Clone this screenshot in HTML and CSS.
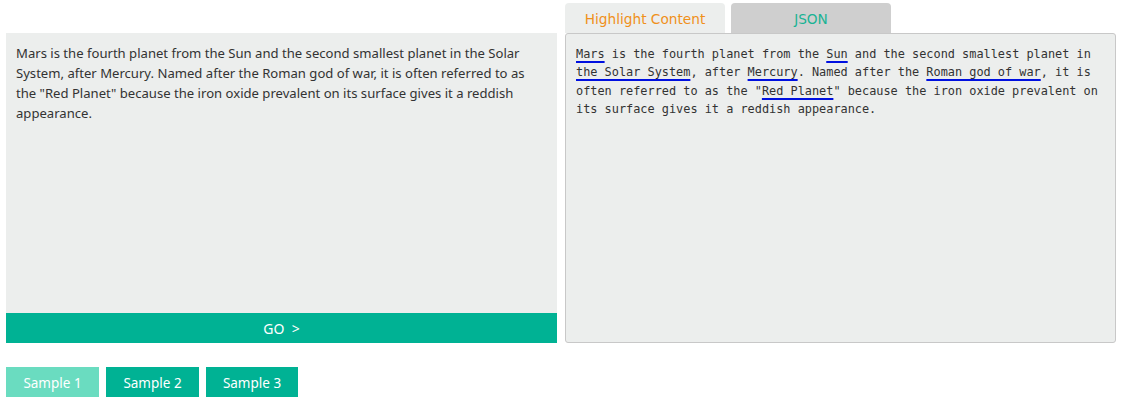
FILE: index.html
```html
<!DOCTYPE html>
<html>
<head>
<meta charset="utf-8">
<link rel="stylesheet" href="styles.css">
</head>
<body>
<div class="main">
  <div class="left">
    <div class="input">Mars is the fourth planet from the Sun and the second smallest planet in the Solar System, after Mercury. Named after the Roman god of war, it is often referred to as the "Red Planet" because the iron oxide prevalent on its surface gives it a reddish appearance.</div>
    <div class="go">GO &nbsp;&gt;</div>
  </div>
  <div class="right">
    <div class="tabs">
      <div class="tab active">Highlight Content</div>
      <div class="tab">JSON</div>
    </div>
    <div class="output"><span class="hl">Mars</span> is the fourth planet from the <span class="hl">Sun</span> and the second smallest planet in <span class="hl">the Solar System</span>, after <span class="hl">Mercury</span>. Named after the <span class="hl">Roman god of war</span>, it is often referred to as the "<span class="hl">Red Planet</span>" because the iron oxide prevalent on its surface gives it a reddish appearance.</div>
  </div>
</div>
<div class="samples">
  <div class="sample light">Sample 1</div>
  <div class="sample">Sample 2</div>
  <div class="sample s3">Sample 3</div>
</div>
</body>
</html>
```
FILE: styles.css
```css
body {
  margin: 0;
  padding: 3px 6px 0 6px;
  background: #fff;
  font-family: "Noto Sans", "Open Sans", sans-serif;
}
.main {
  display: flex;
  gap: 8px;
}
.left {
  width: 551px;
  margin-top: 30px;
  display: flex;
  flex-direction: column;
}
.input {
  height: 280px;
  box-sizing: border-box;
  background: #eceeed;
  padding: 10px 10px;
  font-size: 13.1px;
  line-height: 20px;
  color: #333;
}
.go {
  height: 30px;
  background: #00b294;
  color: #fff;
  font-size: 14px;
  display: flex;
  align-items: center;
  justify-content: center;
}
.right {
  width: 551px;
  display: flex;
  flex-direction: column;
}
.tabs {
  display: flex;
  gap: 6px;
  height: 30px;
}
.tab {
  width: 160px;
  background: #cfcfcf;
  border-radius: 4px 4px 0 0;
  color: #1ab394;
  font-family: "DejaVu Sans", sans-serif;
  font-size: 13.7px;
  padding-top: 2px;
  box-sizing: border-box;
  display: flex;
  align-items: center;
  justify-content: center;
}
.tab.active {
  background: #eceeed;
  color: #f0901a;
}
.output {
  height: 310px;
  box-sizing: border-box;
  background: #eceeed;
  border: 1px solid #c8c8c8;
  border-radius: 3px;
  padding: 11px 10px;
  font-family: "DejaVu Sans Mono", "Liberation Mono", monospace;
  font-size: 11.88px;
  line-height: 18.4px;
  color: #333;
}
.hl {
  text-decoration: underline;
  text-decoration-color: #0010e0;
  text-decoration-thickness: 2px;
  text-underline-offset: 3px;
}
.samples {
  display: flex;
  gap: 7px;
  margin-top: 24px;
}
.sample {
  width: 93px;
  height: 30px;
  background: #00b294;
  color: #fff;
  font-size: 13.5px;
  padding-top: 1px;
  box-sizing: border-box;
  display: flex;
  align-items: center;
  justify-content: center;
}
.sample.s3 {
  width: 92px;
}
.sample.light {
  background: #6adcc0;
}
```
